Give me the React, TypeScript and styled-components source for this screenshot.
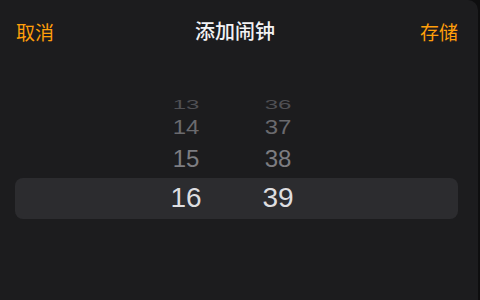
import React from 'react';
import styled, { createGlobalStyle } from 'styled-components';

const GlobalStyle = createGlobalStyle`
  html, body {
    margin: 0;
    padding: 0;
    background: #0e0e0f;
    width: 480px;
    height: 300px;
    overflow: hidden;
  }
`;

const Sheet = styled.div`
  width: 478px;
  height: 300px;
  background: #1c1c1e;
  border-top-right-radius: 10px;
  display: flex;
  flex-direction: column;
  font-family: "Noto Sans CJK SC", "Liberation Sans", sans-serif;
  overflow: hidden;
`;

const Header = styled.div`
  height: 62px;
  padding: 0 20px 0 16px;
  display: grid;
  grid-template-columns: 1fr auto 1fr;
  align-items: center;
`;

const NavButton = styled.span<{ $align: 'left' | 'right' }>`
  font-size: 19px;
  color: #ff9f0a;
  text-align: ${p => p.$align};
  line-height: 1;
`;

const Title = styled.span`
  font-size: 20px;
  font-weight: 500;
  color: #f2f2f4;
  line-height: 1;
  margin-right: 4px;
`;

const Wheel = styled.div`
  margin-top: 23px;
  padding: 0 20px 0 15px;
  display: flex;
  flex-direction: column;
`;

const Row = styled.div<{ $selected?: boolean }>`
  display: grid;
  grid-template-columns: 125px 92px 92px 1fr;
  align-items: center;
  overflow: hidden;
  border-radius: 8px;
  background: ${p => (p.$selected ? '#2c2c2f' : 'transparent')};
`;

const Num = styled.span<{ $col: number; $size: number; $color: string }>`
  grid-column: ${p => p.$col};
  text-align: center;
  font-family: "Liberation Sans", Arial, sans-serif;
  font-size: ${p => p.$size}px;
  color: ${p => p.$color};
  line-height: 1;
`;

interface WheelRow {
  hour: string;
  minute: string;
  height: number;
  size: number;
  color: string;
  squash: number;
  selected?: boolean;
}

const rows: WheelRow[] = [
  { hour: '12', minute: '35', height: 8, size: 24, color: '#3a3a3e', squash: 0.2 },
  { hour: '13', minute: '36', height: 19.5, size: 24, color: '#505054', squash: 0.56 },
  { hour: '14', minute: '37', height: 28, size: 24, color: '#6a6a6e', squash: 0.86 },
  { hour: '15', minute: '38', height: 37, size: 24, color: '#7d7d81', squash: 1 },
  { hour: '16', minute: '39', height: 41, size: 28, color: '#dedee0', squash: 1, selected: true },
];

export default function App() {
  return (
    <>
      <GlobalStyle />
      <Sheet>
        <Header>
          <NavButton $align="left">取消</NavButton>
          <Title>添加闹钟</Title>
          <NavButton $align="right">存储</NavButton>
        </Header>
        <Wheel>
          {rows.map(r => (
            <Row key={r.hour} $selected={r.selected} style={{ height: r.height }}>
              <Num $col={2} $size={r.size} $color={r.color} style={{ transform: `scaleY(${r.squash})` }}>
                {r.hour}
              </Num>
              <Num $col={3} $size={r.size} $color={r.color} style={{ transform: `scaleY(${r.squash})` }}>
                {r.minute}
              </Num>
            </Row>
          ))}
        </Wheel>
      </Sheet>
    </>
  );
}
